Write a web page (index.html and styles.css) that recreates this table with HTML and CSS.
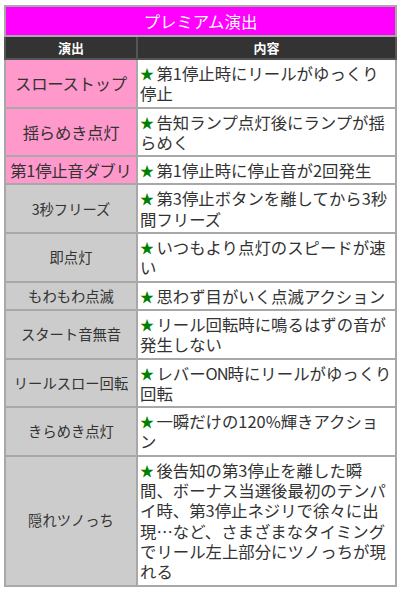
FILE: index.html
```html
<!DOCTYPE html>
<html lang="ja">
<head>
<meta charset="utf-8">
<link rel="stylesheet" href="styles.css">
</head>
<body>
<table class="tbl">
  <colgroup><col class="c1"><col class="c2"></colgroup>
  <tr><th colspan="2" class="title">プレミアム演出</th></tr>
  <tr class="head"><th>演出</th><th>内容</th></tr>
  <tr><td class="name pink">スローストップ</td><td class="desc"><span class="star">★</span>第1停止時にリールがゆっくり停止</td></tr>
  <tr><td class="name pink">揺らめき点灯</td><td class="desc"><span class="star">★</span>告知ランプ点灯後にランプが揺らめく</td></tr>
  <tr><td class="name pink">第1停止音ダブリ</td><td class="desc"><span class="star">★</span>第1停止時に停止音が2回発生</td></tr>
  <tr><td class="name gray">3秒フリーズ</td><td class="desc"><span class="star">★</span>第3停止ボタンを離してから3秒間フリーズ</td></tr>
  <tr><td class="name gray">即点灯</td><td class="desc"><span class="star">★</span>いつもより点灯のスピードが速い</td></tr>
  <tr><td class="name gray">もわもわ点滅</td><td class="desc"><span class="star">★</span>思わず目がいく点滅アクション</td></tr>
  <tr><td class="name gray">スタート音無音</td><td class="desc"><span class="star">★</span>リール回転時に鳴るはずの音が発生しない</td></tr>
  <tr><td class="name gray">リールスロー回転</td><td class="desc"><span class="star">★</span>レバー<span class="latin">ON</span>時にリールがゆっくり回転</td></tr>
  <tr><td class="name gray">きらめき点灯</td><td class="desc"><span class="star">★</span>一瞬だけの120%輝きアクション</td></tr>
  <tr><td class="name gray">隠れツノっち</td><td class="desc"><span class="star">★</span>後告知の第3停止を離した瞬間、ボーナス当選後最初のテンパイ時、第3停止ネジリで徐々に出現…など、さまざまなタイミングでリール左上部分にツノっちが現れる</td></tr>
</table>
</body>
</html>
```
FILE: styles.css
```css
html, body {
  margin: 0;
  padding: 0;
  background: #ffffff;
}
body {
  padding: 5px 5px 0 4px;
  font-family: "Noto Sans CJK JP", "Noto Sans", sans-serif;
  color: #333333;
}
.tbl {
  width: 391px;
  border-collapse: collapse;
  table-layout: fixed;
  font-size: 16.4px;
  line-height: 20.3px;
}
.c1 { width: 132px; }
.c2 { width: 259px; }
.tbl th, .tbl td {
  border: 2px solid #a8a8a8;
  padding: 3px 2px 3px 2px;
}
.title {
  background: #ff00ff;
  color: #ffffff;
  font-weight: normal;
  font-size: 16.4px;
  height: 22px;
  padding: 3px 0 3px;
}
.head th {
  background: #333333;
  color: #ffffff;
  font-size: 13px;
  font-weight: bold;
  line-height: 17px;
  padding: 2px 0 2px;
  border-color: #555555;
}
.name {
  text-align: center;
  vertical-align: middle;
  white-space: nowrap;
}
.pink {
  background: #ff99cc;
  letter-spacing: -0.3px;
}
.gray {
  background: #cccccc;
  font-size: 14.3px;
}
.desc {
  text-align: left;
  vertical-align: top;
  background: #ffffff;
  padding-left: 2px;
}
.latin { letter-spacing: -1px; }
.star {
  display: inline-block;
  vertical-align: top;
  width: 16.4px;
  height: 20.3px;
  line-height: 20.3px;
  font-size: 14px;
  text-align: left;
  color: #008000;
}
```
